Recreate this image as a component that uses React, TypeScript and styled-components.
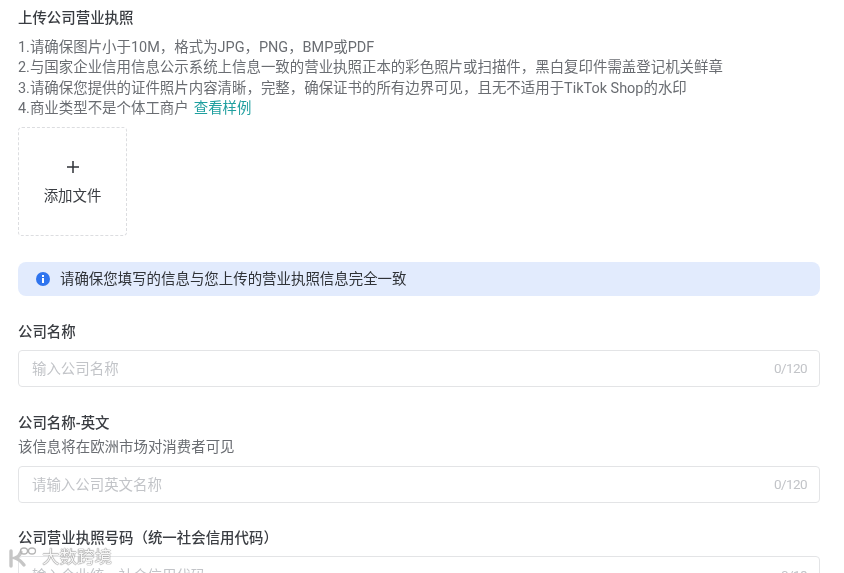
import styled, { createGlobalStyle } from "styled-components";

const GlobalStyle = createGlobalStyle`
  html, body {
    margin: 0;
    height: 100%;
    overflow: hidden;
    background: #fff;
  }
  * {
    box-sizing: border-box;
  }
`;

const Page = styled.div`
  position: relative;
  width: 844px;
  height: 573px;
  overflow: hidden;
  padding: 9px 24px 0 18px;
  font-family: Roboto, "Noto Sans CJK SC", sans-serif;
  font-size: 14.44px;
  line-height: 20.6px;
  color: #6a6d72;
  filter: blur(0.35px);
`;

const Title = styled.div`
  font-weight: 500;
  color: #3a3d42;
`;

const Rules = styled.div`
  margin-top: 8px;
`;

const Link = styled.span`
  margin-left: 5px;
  color: #1f9f9f;
`;

const Upload = styled.div`
  width: 109px;
  height: 109px;
  margin-top: 7px;
  display: flex;
  flex-direction: column;
  align-items: center;
  padding-top: 32px;
  gap: 13px;
  border: 1px dashed #dcdde0;
  border-radius: 4px;
  color: #3a3d42;
`;

const Banner = styled.div`
  height: 34px;
  margin-top: 26px;
  padding-left: 18px;
  display: flex;
  align-items: center;
  gap: 10px;
  background: #e2ebfd;
  border-radius: 8px;
  color: #2f3237;
`;

const BannerText = styled.span`
  padding-top: 2px;
`;

const Field = styled.div<{ $top: number }>`
  margin-top: ${(p) => p.$top}px;
`;

const Label = styled.div`
  font-weight: 500;
  color: #3a3d42;
`;

const Hint = styled.div`
  margin-top: 4px;
`;

const InputBox = styled.div<{ $top: number }>`
  height: 37px;
  margin-top: ${(p) => p.$top}px;
  padding: 4px 12px 0 13px;
  display: flex;
  align-items: center;
  justify-content: space-between;
  border: 1px solid #e3e4e6;
  border-radius: 4px;
  color: #c2c4c8;
`;

const Count = styled.span`
  margin-bottom: 4px;
  font-size: 13.5px;
  letter-spacing: -0.6px;
`;

const Watermark = styled.div`
  position: absolute;
  left: 8px;
  bottom: 4px;
  display: flex;
  align-items: center;
  gap: 4px;
  font-size: 17.5px;
  line-height: 20px;
  color: rgba(255, 255, 255, 0.95);
  text-shadow: 0 0 1px #666, 0 0 1px #666;
`;

const fields = [
  { label: "公司名称", holder: "输入公司名称", count: "0/120", fieldTop: 27, top: 6 },
  { label: "公司名称-英文", hint: "该信息将在欧洲市场对消费者可见", holder: "请输入公司英文名称", count: "0/120", fieldTop: 27, top: 7 },
  { label: "公司营业执照号码（统一社会信用代码）", holder: "输入企业统一社会信用代码", count: "0/18", fieldTop: 26, top: 7 },
];

function App() {
  return (
    <Page>
      <GlobalStyle />
      <Title>上传公司营业执照</Title>
      <Rules>
        <div>1.请确保图片小于10M，格式为JPG，PNG，BMP或PDF</div>
        <div>2.与国家企业信用信息公示系统上信息一致的营业执照正本的彩色照片或扫描件，黑白复印件需盖登记机关鲜章</div>
        <div>3.请确保您提供的证件照片内容清晰，完整，确保证书的所有边界可见，且无不适用于TikTok Shop的水印</div>
        <div>
          4.商业类型不是个体工商户<Link>查看样例</Link>
        </div>
      </Rules>
      <Upload>
        <svg width="14" height="14" viewBox="0 0 14 14" fill="none" stroke="#2f3237" strokeWidth="1.5">
          <path d="M7 1v12M1 7h12" />
        </svg>
        <span>添加文件</span>
      </Upload>
      <Banner>
        <svg width="14" height="14" viewBox="0 0 14 14">
          <circle cx="7" cy="7" r="7" fill="#2f74ee" />
          <rect x="6" y="6" width="2" height="5" fill="#fff" />
          <rect x="6" y="3" width="2" height="2" fill="#fff" />
        </svg>
        <BannerText>请确保您填写的信息与您上传的营业执照信息完全一致</BannerText>
      </Banner>
      {fields.map((f) => (
        <Field key={f.label} $top={f.fieldTop}>
          <Label>{f.label}</Label>
          {f.hint && <Hint>{f.hint}</Hint>}
          <InputBox $top={f.top}>
            <span>{f.holder}</span>
            <Count>{f.count}</Count>
          </InputBox>
        </Field>
      ))}
      <Watermark>
        <svg width="30" height="24" viewBox="0 0 30 24" fill="none" strokeLinecap="round">
          <path d="M3 6v15" stroke="#c6c6c6" strokeWidth="3.4" />
          <path d="M13 7c-1 3-3 5-6 6 3 1 6 3 9 7" stroke="#c6c6c6" strokeWidth="3.4" />
          <ellipse cx="16" cy="6" rx="3.5" ry="3" stroke="#b4b4b4" strokeWidth="1.3" />
          <ellipse cx="24" cy="6" rx="3.5" ry="3" stroke="#b4b4b4" strokeWidth="1.3" />
        </svg>
        <span>大数跨境</span>
      </Watermark>
    </Page>
  );
}

export default App;
